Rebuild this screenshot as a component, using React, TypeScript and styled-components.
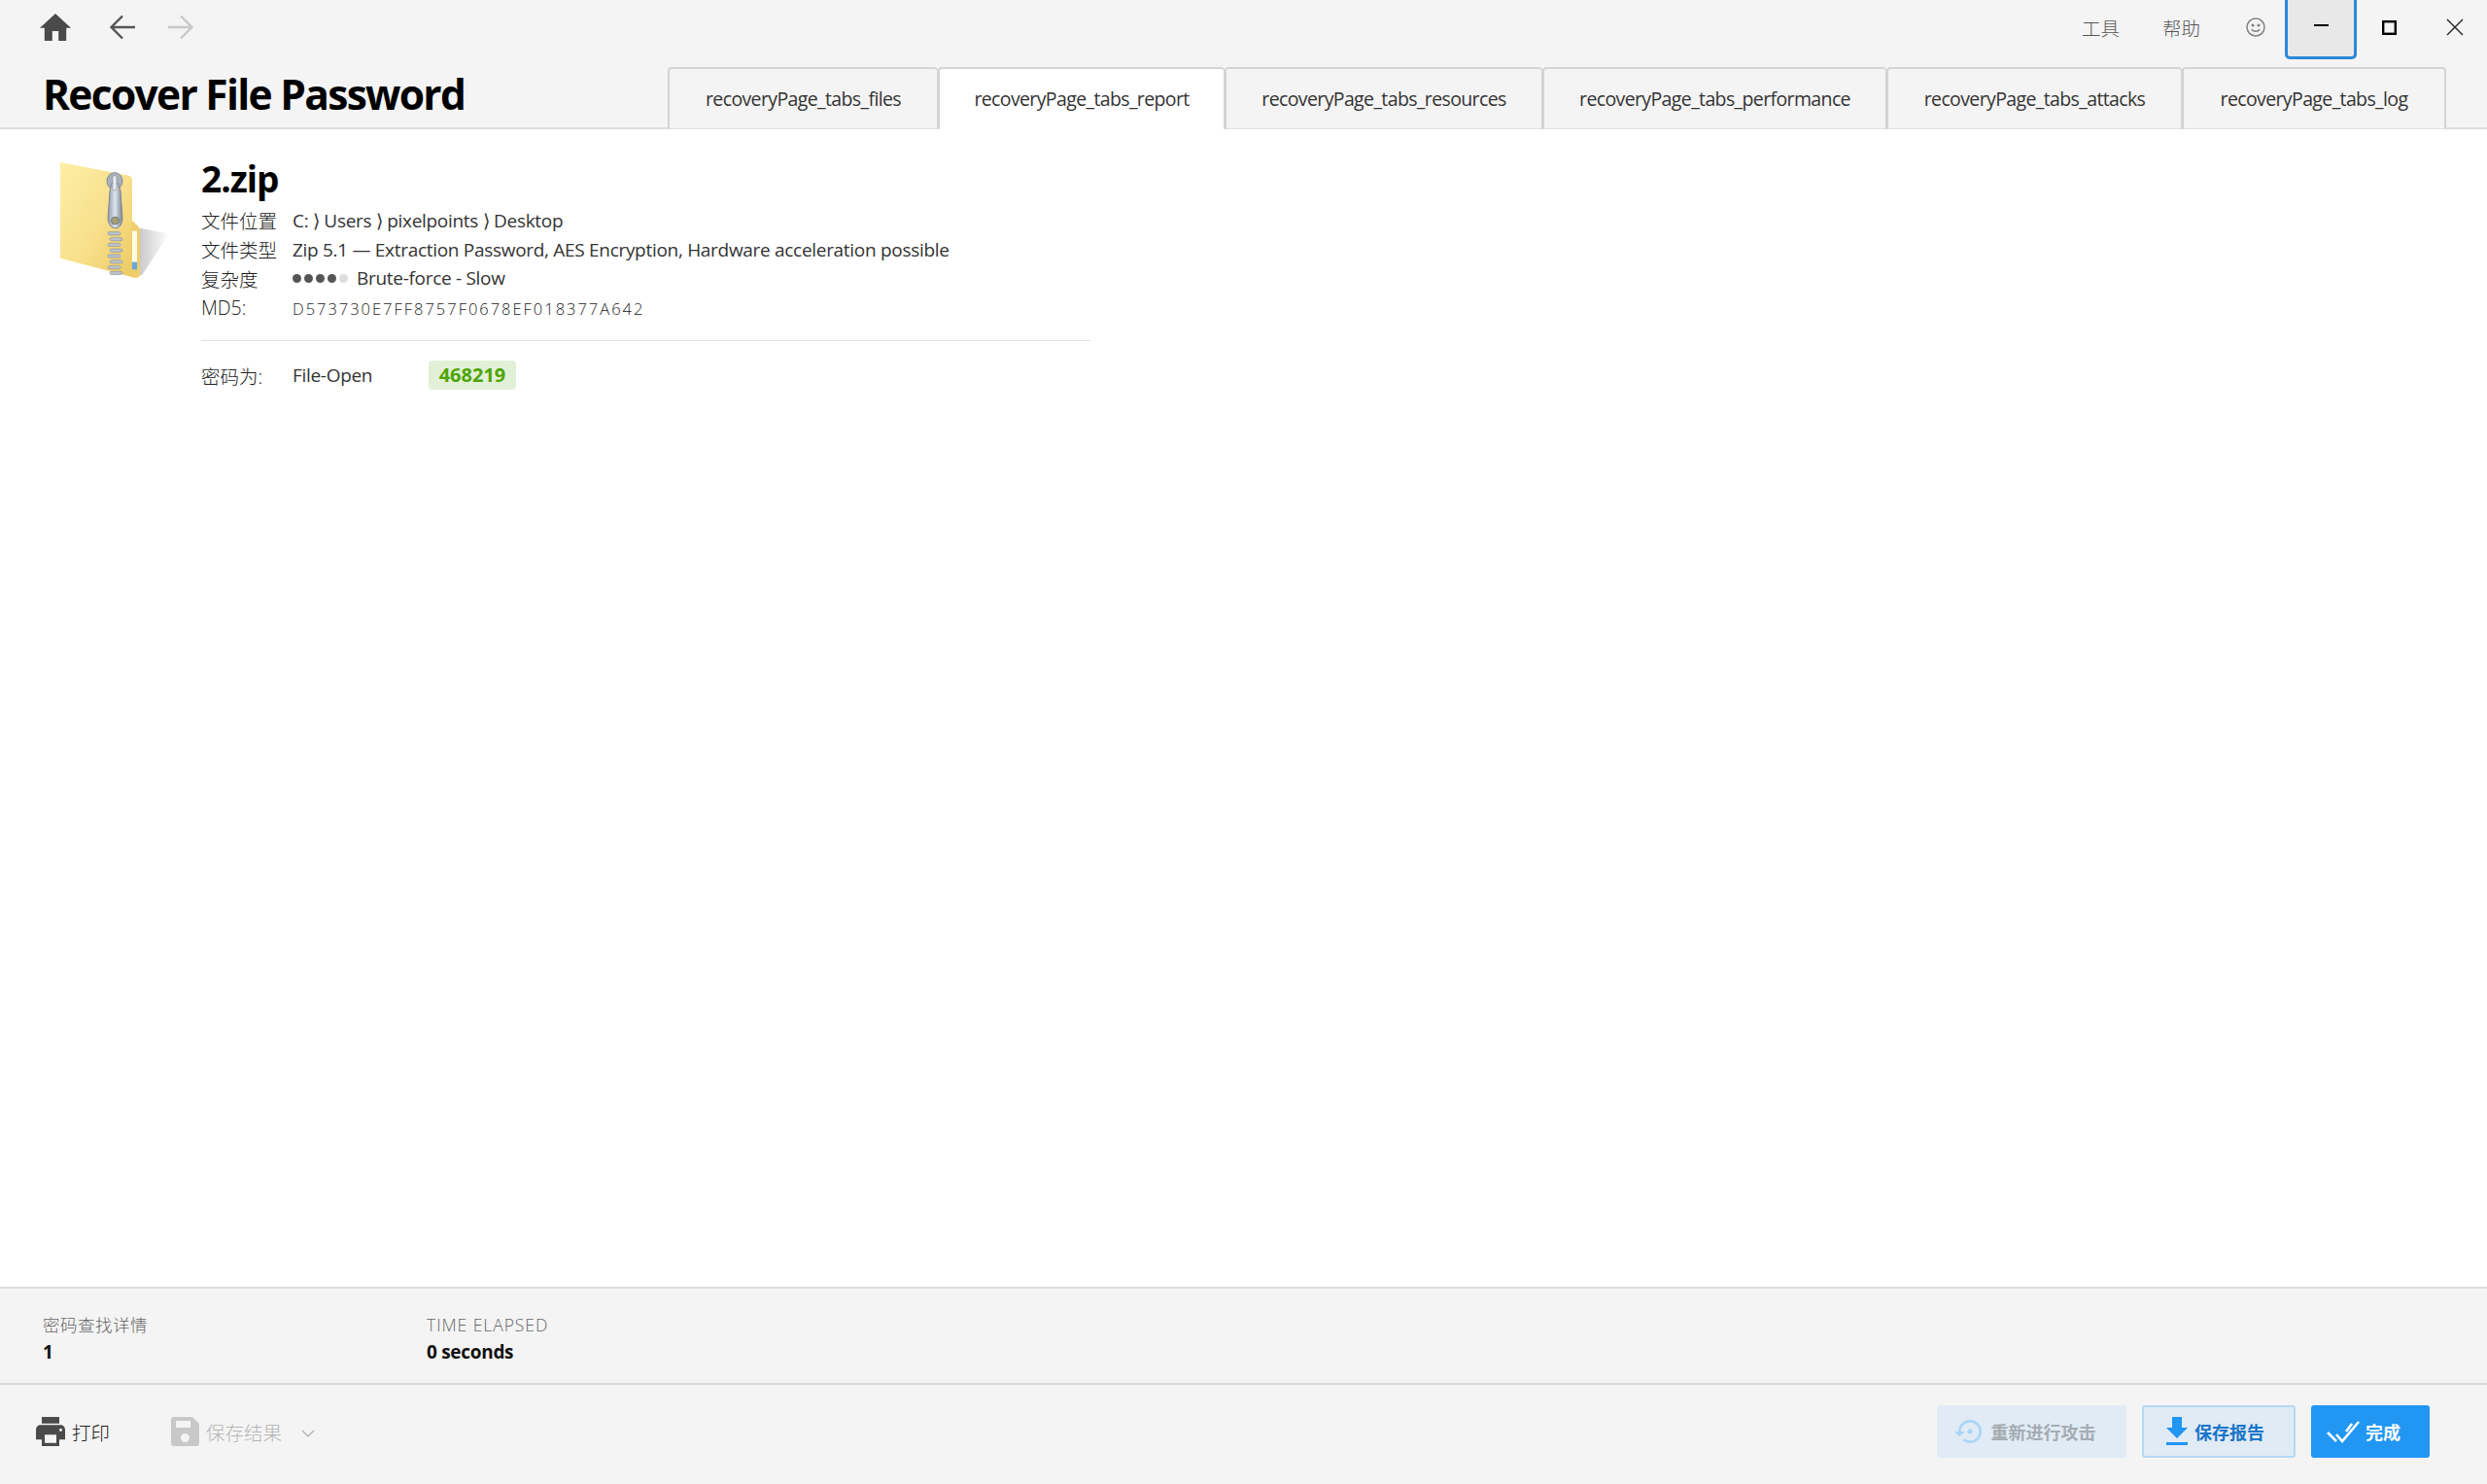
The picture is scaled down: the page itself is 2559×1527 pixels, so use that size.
import React from 'react';
import styled, { createGlobalStyle } from 'styled-components';

const FONT = `"Open Sans", "Noto Sans CJK SC", sans-serif`;

const GlobalStyle = createGlobalStyle`
  html, body {
    margin: 0;
    padding: 0;
    height: 100%;
    background: #ffffff;
    font-family: ${FONT};
    overflow: hidden;
  }
  * { box-sizing: border-box; }
`;

const Page = styled.div`
  display: flex;
  flex-direction: column;
  width: 2559px;
  height: 1527px;
`;

const Header = styled.header`
  background: #f4f4f4;
  border-bottom: 2px solid #dfdfdf;
  height: 133px;
  flex-shrink: 0;
`;

const TopBar = styled.div`
  display: flex;
  align-items: flex-start;
  justify-content: space-between;
  height: 67px;
`;

const NavGroup = styled.div`
  display: flex;
  align-items: center;
  height: 56px;
  padding-left: 41px;
`;

const NavIcon = styled.svg<{ $gap?: number }>`
  display: block;
  margin-right: ${(p) => p.$gap ?? 0}px;
`;

const MenuGroup = styled.div`
  display: flex;
  align-items: flex-start;
`;

const MenuItem = styled.div<{ $w: number }>`
  width: ${(p) => p.$w}px;
  height: 60px;
  line-height: 60px;
  font-size: 19.5px;
  color: #555;
  font-weight: 300;
  text-align: left;
`;

const SmileSlot = styled.div`
  width: 40px;
  height: 56px;
  display: flex;
  align-items: center;
`;

const WinButton = styled.div<{ $focus?: boolean; $w?: number }>`
  width: ${(p) => p.$w ?? 67}px;
  height: ${(p) => (p.$focus ? 61 : 56)}px;
  display: flex;
  align-items: center;
  justify-content: center;
  ${(p) =>
    p.$focus &&
    `background: #e8e8e8;
     width: 74px;
     border: 3px solid #2b88d8;
     border-top: none;
     border-radius: 0 0 5px 5px;
     padding-bottom: 6px;`}
`;

const TitleRow = styled.div`
  display: flex;
  align-items: flex-end;
  justify-content: space-between;
  height: 65px;
  padding: 0 42px 0 44px;
`;

const Title = styled.h1`
  margin: 0 0 13px;
  font-size: 42.5px;
  line-height: 44px;
  font-weight: 700;
  letter-spacing: -1.7px;
  color: #000;
`;

const Tabs = styled.div`
  display: flex;
  align-items: flex-end;
  margin-bottom: -2px;
`;

const Tab = styled.div<{ $w: number; $active?: boolean }>`
  width: ${(p) => p.$w}px;
  height: 65px;
  padding-top: 16px;
  text-align: center;
  font-size: 19.5px;
  line-height: 30px;
  letter-spacing: -0.62px;
  color: #333;
  background: ${(p) => (p.$active ? '#ffffff' : '#f4f4f4')};
  border: 2px solid #d4d4d4;
  border-bottom: ${(p) => (p.$active ? '2px solid #fff' : '2px solid #dfdfdf')};
  border-left-width: 2px;
  border-right-width: 1px;
  border-radius: 4px 4px 0 0;
  &:last-child { border-right-width: 2px; }
`;

const Content = styled.main`
  flex: 1;
  background: #fff;
  display: flex;
  align-items: flex-start;
  padding: 30px 0 0 62px;
`;

const FolderSlot = styled.div`
  width: 145px;
  flex-shrink: 0;
  padding-top: 4px;
`;

const Details = styled.div`
  width: 915px;
`;

const FileName = styled.h2`
  margin: 0 0 7px;
  font-size: 37px;
  line-height: 42px;
  font-weight: 700;
  letter-spacing: -1px;
  color: #000;
`;

const Row = styled.div`
  display: flex;
  align-items: center;
  height: 29.8px;
  font-size: 19px;
  color: #333;
`;

const Label = styled.span`
  width: 94px;
  flex-shrink: 0;
  font-size: 19.5px;
  font-weight: 300;
  color: #222;
`;

const Value = styled.span`
  font-weight: 400;
  letter-spacing: -0.3px;
  color: #333;
  white-space: nowrap;
`;

const Md5 = styled.span`
  font-size: 16.5px;
  font-weight: 300;
  letter-spacing: 1.98px;
  color: #222;
  white-space: nowrap;
  position: relative;
  top: 1px;
`;

const Dots = styled.span`
  display: inline-flex;
  gap: 3px;
  margin-right: 9px;
`;

const Dot = styled.span<{ $on: boolean }>`
  width: 9px;
  height: 9px;
  border-radius: 50%;
  background: ${(p) => (p.$on ? '#555' : '#ddd')};
`;

const Divider = styled.hr`
  border: none;
  border-top: 1px solid #e3e3e3;
  margin: 19px 0 20px;
`;

const PasswordRow = styled.div`
  display: flex;
  align-items: center;
  height: 30px;
  font-size: 19px;
`;

const PasswordKind = styled(Value)`
  width: 140px;
`;

const Badge = styled.span`
  width: 90px;
  height: 30px;
  line-height: 30px;
  border-radius: 4px;
  background: #e3f0d8;
  color: #4ea400;
  font-weight: 700;
  font-size: 20px;
  text-align: center;
  letter-spacing: 0;
`;

const Stats = styled.section`
  display: flex;
  height: 101px;
  flex-shrink: 0;
  padding: 25px 0 0 44px;
  background: #f4f4f4;
  border-top: 2px solid #dfdfdf;
  border-bottom: 2px solid #d8d8d8;
`;

const Stat = styled.div<{ $w: number }>`
  width: ${(p) => p.$w}px;
`;

const StatLabel = styled.div<{ $spacing: number }>`
  font-size: 17.5px;
  line-height: 24px;
  font-weight: 300;
  color: #666;
  letter-spacing: ${(p) => p.$spacing}px;
`;

const StatValue = styled.div`
  margin-top: 3px;
  font-size: 19px;
  line-height: 26px;
  font-weight: 700;
  letter-spacing: -0.3px;
  color: #111;
`;

const Footer = styled.footer`
  height: 102px;
  flex-shrink: 0;
  display: flex;
  align-items: center;
  justify-content: space-between;
  background: #f4f4f4;
  padding: 0 59px 6px 37px;
`;

const FooterGroup = styled.div`
  display: flex;
  align-items: center;
`;

const LinkButton = styled.div<{ $disabled?: boolean; $mr?: number }>`
  display: flex;
  align-items: center;
  gap: 7px;
  margin-right: ${(p) => p.$mr ?? 0}px;
  font-size: 19.5px;
  font-weight: 300;
  color: ${(p) => (p.$disabled ? '#b4b4b4' : '#222')};
`;

const ActionButton = styled.div<{ $kind: 'disabled' | 'outline' | 'solid'; $w: number; $pr: number }>`
  display: flex;
  align-items: center;
  justify-content: center;
  gap: 6px;
  width: ${(p) => p.$w}px;
  height: 54px;
  margin-left: 16px;
  padding-right: ${(p) => p.$pr}px;
  border-radius: 3px;
  font-size: 18px;
  font-weight: 700;
  background: ${(p) => (p.$kind === 'solid' ? '#2196f3' : '#e0ebf5')};
  color: ${(p) => (p.$kind === 'solid' ? '#fff' : p.$kind === 'outline' ? '#1976c8' : '#a4abb2')};
  border: ${(p) => (p.$kind === 'outline' ? '2px solid #b5d8f5' : 'none')};
`;

function FolderIcon() {
  return (
    <svg width="116" height="120" viewBox="0 0 116 124" preserveAspectRatio="none">
      <defs>
        <linearGradient id="folderFace" x1="0" y1="0" x2="1" y2="1">
          <stop offset="0" stopColor="#fdeea6" />
          <stop offset="0.55" stopColor="#f8e08c" />
          <stop offset="1" stopColor="#ecca62" />
        </linearGradient>
        <linearGradient id="zipSteel" x1="0" y1="0" x2="1" y2="0">
          <stop offset="0" stopColor="#8f9aa8" />
          <stop offset="0.5" stopColor="#dfe5ec" />
          <stop offset="1" stopColor="#77828f" />
        </linearGradient>
        <linearGradient id="folderShadow" x1="0" y1="0" x2="1" y2="0">
          <stop offset="0" stopColor="#c4c4c4" />
          <stop offset="1" stopColor="#ffffff" />
        </linearGradient>
      </defs>
      <path d="M82 70 L112 76 L84 120 L78 120 Z" fill="url(#folderShadow)" />
      <path d="M0 0 L70 14 Q74 15 74 19 L74 122 L0 102 Z" fill="url(#folderFace)" />
      <path d="M74 62 L80 68 Q82 70 82 72 L82 119 Q82 122 78 123 L72 122 Z" fill="#eecd6b" />
      <rect x="74" y="73" width="5" height="40" fill="#fffbe6" />
      <rect x="74" y="106" width="5" height="8" fill="#6da6df" />
      <ellipse cx="56" cy="20" rx="8" ry="9" fill="#a9b1bb" stroke="#7d8792" />
      <path d="M51 30 L53 22 L59 22 L62 30 L64 60 Q63 70 57 70 Q50 70 49 60 Z" fill="url(#zipSteel)" stroke="#7d8792" strokeWidth="1" />
      <rect x="54" y="14" width="4" height="16" rx="2" fill="#e8ecf0" stroke="#7d8792" strokeWidth="0.6" />
      <circle cx="56.5" cy="62" r="4" fill="#a89e74" stroke="#6f7781" />
      {[74, 80, 86, 92, 98, 104, 110, 116].map((y, i) => (
        <rect key={y} x={i % 2 ? 51 : 49} y={y} width="13" height="3.4" rx="1.7" fill="#bcc3ca" stroke="#858d96" strokeWidth="0.6" />
      ))}
    </svg>
  );
}

const DETAIL_TABS = [
  { key: 'files', w: 278 },
  { key: 'report', w: 295, active: true },
  { key: 'resources', w: 327 },
  { key: 'performance', w: 354 },
  { key: 'attacks', w: 304 },
  { key: 'log', w: 272 },
];

export default function App() {
  return (
    <>
      <GlobalStyle />
      <Page>
        <Header>
          <TopBar>
            <NavGroup>
              <NavIcon $gap={39} width="32" height="28" viewBox="2 3 20 17" preserveAspectRatio="none">
                <path d="M10 20v-6h4v6h5v-8h3L12 3 2 12h3v8z" fill="#4a4a4a" />
              </NavIcon>
              <NavIcon $gap={32} width="28" height="28" viewBox="0 0 28 28" fill="none" stroke="#555" strokeWidth="2.4">
                <path d="M27 14H3M14 2.5 2.5 14 14 25.5" />
              </NavIcon>
              <NavIcon width="28" height="28" viewBox="0 0 28 28" fill="none" stroke="#c8c8c8" strokeWidth="2.4">
                <path d="M1 14h24M14 2.5 25.5 14 14 25.5" />
              </NavIcon>
            </NavGroup>
            <MenuGroup>
              <MenuItem $w={83}>工具</MenuItem>
              <MenuItem $w={86}>帮助</MenuItem>
              <SmileSlot>
                <svg width="20" height="20" viewBox="0 0 20 20" fill="none" stroke="#808080" strokeWidth="1.5">
                  <circle cx="10" cy="10" r="9" />
                  <circle cx="7" cy="8" r="0.8" fill="#808080" />
                  <circle cx="13" cy="8" r="0.8" fill="#808080" />
                  <path d="M5.8 12.2c2 2.6 6.4 2.6 8.4 0" />
                </svg>
              </SmileSlot>
              <WinButton $focus>
                <svg width="15" height="2" viewBox="0 0 15 2"><rect width="15" height="2" fill="#000" /></svg>
              </WinButton>
              <WinButton>
                <svg width="15" height="15" viewBox="0 0 15 15" fill="none" stroke="#000" strokeWidth="2.4"><rect x="1.2" y="1.2" width="12.6" height="12.6" /></svg>
              </WinButton>
              <WinButton>
                <svg width="18" height="18" viewBox="0 0 18 18" fill="none" stroke="#222" strokeWidth="1.4"><path d="M1 1l16 16M17 1 1 17" /></svg>
              </WinButton>
            </MenuGroup>
          </TopBar>
          <TitleRow>
            <Title>Recover File Password</Title>
            <Tabs>
              {DETAIL_TABS.map((t) => (
                <Tab key={t.key} $w={t.w} $active={t.active}>
                  recoveryPage_tabs_{t.key}
                </Tab>
              ))}
            </Tabs>
          </TitleRow>
        </Header>

        <Content>
          <FolderSlot>
            <FolderIcon />
          </FolderSlot>
          <Details>
            <FileName>2.zip</FileName>
            <Row>
              <Label>文件位置</Label>
              <Value>C: ⟩ Users ⟩ pixelpoints ⟩ Desktop</Value>
            </Row>
            <Row>
              <Label>文件类型</Label>
              <Value>Zip 5.1 — Extraction Password, AES Encryption, Hardware acceleration possible</Value>
            </Row>
            <Row>
              <Label>复杂度</Label>
              <Dots>
                {[true, true, true, true, false].map((on, i) => (
                  <Dot key={i} $on={on} />
                ))}
              </Dots>
              <Value>Brute-force - Slow</Value>
            </Row>
            <Row>
              <Label>MD5:</Label>
              <Md5>D573730E7FF8757F0678EF018377A642</Md5>
            </Row>
            <Divider />
            <PasswordRow>
              <Label>密码为:</Label>
              <PasswordKind>File-Open</PasswordKind>
              <Badge>468219</Badge>
            </PasswordRow>
          </Details>
        </Content>

        <Stats>
          <Stat $w={395}>
            <StatLabel $spacing={0.5}>密码查找详情</StatLabel>
            <StatValue>1</StatValue>
          </Stat>
          <Stat $w={400}>
            <StatLabel $spacing={0.95}>TIME ELAPSED</StatLabel>
            <StatValue>0 seconds</StatValue>
          </Stat>
        </Stats>

        <Footer>
          <FooterGroup>
            <LinkButton $mr={63}>
              <svg width="30" height="30" viewBox="2 3 20 18" preserveAspectRatio="none">
                <path fill="#4a4a4a" d="M19 8H5c-1.66 0-3 1.34-3 3v6h4v4h12v-4h4v-6c0-1.66-1.34-3-3-3zm-3 11H8v-5h8v5zm3-7c-.55 0-1-.45-1-1s.45-1 1-1 1 .45 1 1-.45 1-1 1zm-1-9H6v4h12V3z" />
              </svg>
              打印
            </LinkButton>
            <LinkButton $disabled $mr={20}>
              <svg width="29" height="30" viewBox="0 0 29 30">
                <path fill="#c8c8c8" fillRule="evenodd" d="M3 0h19l7 7v20a3 3 0 0 1-3 3H3a3 3 0 0 1-3-3V3a3 3 0 0 1 3-3zm2 4v7h15V4zm9.5 13a4.5 4.5 0 1 0 0 9 4.5 4.5 0 0 0 0-9z" />
              </svg>
              保存结果
            </LinkButton>
            <svg width="14" height="8" viewBox="0 0 14 8" fill="none" stroke="#ababab" strokeWidth="1.1" style={{ marginTop: 4 }}>
              <path d="M1 1l6 6 6-6" />
            </svg>
          </FooterGroup>
          <FooterGroup>
            <ActionButton $kind="disabled" $w={195} $pr={14}>
              <svg width="32" height="32" viewBox="0 0 24 24">
                <path fill="#abd5f6" d="M14 12c0-1.1-.9-2-2-2s-2 .9-2 2 .9 2 2 2 2-.9 2-2zm-2-9c-4.97 0-9 4.03-9 9H0l4 4 4-4H5c0-3.87 3.13-7 7-7s7 3.13 7 7-3.13 7-7 7c-1.51 0-2.91-.49-4.06-1.3l-1.42 1.44C8.04 20.3 9.94 21 12 21c4.97 0 9-4.03 9-9s-4.03-9-9-9z" />
              </svg>
              重新进行攻击
            </ActionButton>
            <ActionButton $kind="outline" $w={158} $pr={8}>
              <svg width="24" height="30" viewBox="0 0 24 30">
                <path fill="#2196f3" d="M7 0h10v11h6L12 22 1 11h6zM1 26h22v3H1z" />
              </svg>
              保存报告
            </ActionButton>
            <ActionButton $kind="solid" $w={122} $pr={14}>
              <svg width="34" height="24" viewBox="0 0 34 24" fill="none" stroke="#fff" strokeWidth="2.6">
                <path d="M1 13l9 9M10 15l6 7L33 2M20 12l6-8" />
              </svg>
              完成
            </ActionButton>
          </FooterGroup>
        </Footer>
      </Page>
    </>
  );
}
